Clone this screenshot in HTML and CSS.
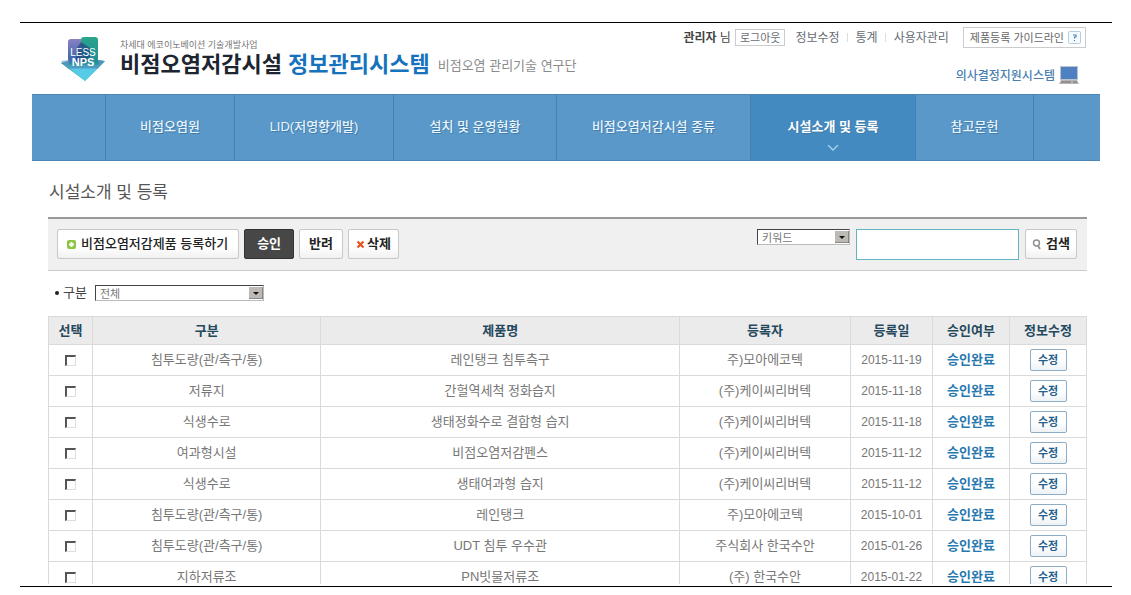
FILE: index.html
```html
<!DOCTYPE html>
<html lang="ko">
<head>
<meta charset="utf-8">
<meta name="viewport" content="width=device-width, initial-scale=1">
<title>비점오염저감시설 정보관리시스템</title>
<link rel="stylesheet" href="styles.css">
</head>
<body>
<div class="frame">
<div class="page">
  <header class="header">
    <a class="brand" href="#">
      <svg class="logo" viewBox="0 0 46 48" aria-hidden="true">
        <defs>
          <linearGradient id="lg-a" x1="0" y1="0" x2="0" y2="1"><stop offset="0" stop-color="#8a82c4"/><stop offset=".5" stop-color="#4668ac"/><stop offset="1" stop-color="#3c93c9"/></linearGradient>
          <linearGradient id="lg-b" x1="0" y1="0" x2="0" y2="1"><stop offset="0" stop-color="#2aa58c"/><stop offset=".55" stop-color="#248c98"/><stop offset="1" stop-color="#4bc6dc"/></linearGradient>
        </defs>
        <path d="M11 4h12l4 5v31L1 28l7-2V7q0-3 3-3z" fill="url(#lg-a)"/>
        <path d="M21 5q0-3 3-3h11q3 0 3 3v20l7 1-20 20L1 28h20z" fill="url(#lg-b)"/>
        <path d="M21 7l9 6v14H16V14z" fill="#203f80" opacity=".65"/>
        <path d="M9 33h29L25 46z" fill="#56cbe6"/>
        <path d="M1 26l8-1v5h30l-1-5 7 1-7 8H8z" fill="#609fcb" opacity=".6"/>
        <text x="23" y="21" class="logo-top">LESS</text>
        <text x="23" y="31" class="logo-bottom">NPS</text>
      </svg>
      <span class="brand-text">
        <span class="brand-program">차세대 에코이노베이션 기술개발사업</span>
        <span class="brand-line"><strong class="brand-name">비점오염저감시설 <em>정보관리시스템</em></strong><span class="brand-group">비점오염 관리기술 연구단</span></span>
      </span>
    </a>
    <div class="account">
      <div class="account-row">
        <span class="user"><strong>관리자</strong> 님</span>
        <button class="logout" type="button">로그아웃</button>
        <ul class="account-links">
          <li><a href="#">정보수정</a></li>
          <li><a href="#">통계</a></li>
          <li><a href="#">사용자관리</a></li>
        </ul>
        <a class="guide" href="#">제품등록 가이드라인
          <svg class="guide-icon" viewBox="0 0 13 13" aria-hidden="true"><rect x=".5" y=".5" width="12" height="12" rx="1" fill="#f5fafd" stroke="#b5cddd"/><path d="M5 4h3v2H6.500v1.500M6.500 9v1" fill="none" stroke="#4c86b8" stroke-width="1.200"/></svg>
        </a>
      </div>
      <a class="decision" href="#">의사결정지원시스템
        <svg class="decision-icon" viewBox="0 0 20 19" aria-hidden="true"><rect x="1" y="0" width="18" height="14" fill="#bcc3cf"/><rect x="2" y="1" width="16" height="12" fill="#4e80c2"/><path d="M2 14h16l2 4H0z" fill="#b9b4b6"/><path d="M2 16h10M14 16h4" stroke="#6c6870"/></svg>
      </a>
    </div>
  </header>

  <nav class="nav" aria-label="주 메뉴">
    <span></span>
    <a href="#">비점오염원</a>
    <a href="#">LID(저영향개발)</a>
    <a href="#">설치 및 운영현황</a>
    <a href="#">비점오염저감시설 종류</a>
    <a class="active" href="#" aria-current="page">시설소개 및 등록
      <svg class="chevron" viewBox="0 0 12 6" aria-hidden="true"><path d="M1 0l5 5 5-5" fill="none" stroke="#a9d3ef" stroke-width="1.300"/></svg>
    </a>
    <a href="#">참고문헌</a>
    <span></span>
  </nav>

  <main class="content">
    <h1 class="title">시설소개 및 등록</h1>

    <div class="toolbar">
      <div class="actions">
        <button class="btn btn-add" type="button"><svg class="icon" viewBox="0 0 9 9" aria-hidden="true"><rect width="9" height="9" rx="2" fill="#8ac63f"/><path d="M4.500 2v5M2 4.500h5" stroke="#fff" stroke-width="2"/></svg>비점오염저감제품 등록하기</button>
        <button class="btn btn-dark" type="button">승인</button>
        <button class="btn" type="button">반려</button>
        <button class="btn btn-delete" type="button"><svg class="icon" viewBox="0 0 9 9" aria-hidden="true"><path d="M1.500 1.500l6 6M7.500 1.500l-6 6" stroke="#e8531f" stroke-width="2.200"/></svg>삭제</button>
      </div>
      <form class="search">
        <span class="picker picker-key">
          <select aria-label="검색 조건"><option>키워드</option></select>
          <svg class="arrow" viewBox="0 0 14 12" aria-hidden="true"><rect width="14" height="12" fill="#bdbab5"/><path d="M0 12h14V0" fill="none" stroke="#555"/><path d="M4 5h6L7 8z" fill="#111"/></svg>
        </span>
        <input class="search-input" type="text" aria-label="검색어">
        <button class="btn btn-search" type="button"><svg class="icon" viewBox="0 0 9 11" aria-hidden="true"><circle cx="4.500" cy="4" r="3" fill="none" stroke="#8c8c8c" stroke-width="1.400"/><path d="M6 6.500L8 10" stroke="#8c8c8c" stroke-width="1.600"/></svg>검색</button>
      </form>
    </div>

    <div class="filter">
      <label for="kind">구분</label>
      <span class="picker picker-kind">
        <select id="kind"><option>전체</option></select>
        <svg class="arrow" viewBox="0 0 14 12" aria-hidden="true"><rect width="14" height="12" fill="#bdbab5"/><path d="M0 12h14V0" fill="none" stroke="#555"/><path d="M4 5h6L7 8z" fill="#111"/></svg>
      </span>
    </div>

    <table class="list">
      <colgroup><col class="c-check"><col class="c-kind"><col><col class="c-owner"><col class="c-date"><col class="c-state"><col class="c-edit"></colgroup>
      <thead>
        <tr><th>선택</th><th>구분</th><th>제품명</th><th>등록자</th><th>등록일</th><th>승인여부</th><th>정보수정</th></tr>
      </thead>
      <tbody>
        <tr><td><input type="checkbox" aria-label="레인탱크 침투측구 선택"></td><td>침투도량(관/측구/통)</td><td>레인탱크 침투측구</td><td>주)모아에코텍</td><td class="date">2015-11-19</td><td class="state">승인완료</td><td><button class="edit" type="button">수정</button></td></tr>
        <tr><td><input type="checkbox" aria-label="간헐역세척 정화습지 선택"></td><td>저류지</td><td>간헐역세척 정화습지</td><td>(주)케이씨리버텍</td><td class="date">2015-11-18</td><td class="state">승인완료</td><td><button class="edit" type="button">수정</button></td></tr>
        <tr><td><input type="checkbox" aria-label="생태정화수로 결합형 습지 선택"></td><td>식생수로</td><td>생태정화수로 결합형 습지</td><td>(주)케이씨리버텍</td><td class="date">2015-11-18</td><td class="state">승인완료</td><td><button class="edit" type="button">수정</button></td></tr>
        <tr><td><input type="checkbox" aria-label="비점오염저감펜스 선택"></td><td>여과형시설</td><td>비점오염저감펜스</td><td>(주)케이씨리버텍</td><td class="date">2015-11-12</td><td class="state">승인완료</td><td><button class="edit" type="button">수정</button></td></tr>
        <tr><td><input type="checkbox" aria-label="생태여과형 습지 선택"></td><td>식생수로</td><td>생태여과형 습지</td><td>(주)케이씨리버텍</td><td class="date">2015-11-12</td><td class="state">승인완료</td><td><button class="edit" type="button">수정</button></td></tr>
        <tr><td><input type="checkbox" aria-label="레인탱크 선택"></td><td>침투도량(관/측구/통)</td><td>레인탱크</td><td>주)모아에코텍</td><td class="date">2015-10-01</td><td class="state">승인완료</td><td><button class="edit" type="button">수정</button></td></tr>
        <tr><td><input type="checkbox" aria-label="UDT 침투 우수관 선택"></td><td>침투도량(관/측구/통)</td><td>UDT 침투 우수관</td><td>주식회사 한국수안</td><td class="date">2015-01-26</td><td class="state">승인완료</td><td><button class="edit" type="button">수정</button></td></tr>
        <tr><td><input type="checkbox" aria-label="PN빗물저류조 선택"></td><td>지하저류조</td><td>PN빗물저류조</td><td>(주) 한국수안</td><td class="date">2015-01-22</td><td class="state">승인완료</td><td><button class="edit" type="button">수정</button></td></tr>
      </tbody>
    </table>
  </main>
</div>
</div>
</body>
</html>
```
FILE: styles.css
```css
* { box-sizing: border-box; }

body {
  display: flex;
  height: 100vh;
  margin: 0;
  padding: 22px 19px 8px 20px;
  background: #fff;
  color: #777;
  font: 13px/18px "Liberation Sans", "Noto Sans CJK KR", sans-serif;
}

a { color: inherit; text-decoration: none; }

button, input, select { margin: 0; font: inherit; color: inherit; }

button { cursor: pointer; white-space: nowrap; }

.frame {
  display: flex;
  flex: 1;
  min-width: 0;
  padding-bottom: 2px;
  border-top: 1px solid #000;
  border-bottom: 1px solid #000;
}

.page {
  flex: 1;
  min-width: 0;
  padding: 0 12px;
  overflow: hidden;
}

/* Header */
.header {
  display: flex;
  justify-content: space-between;
  height: 71px;
  padding: 4px 14px 0 28px;
  white-space: nowrap;
}

.brand { display: flex; gap: 14px; padding-top: 8px; }

.logo { width: 46px; height: 48px; }

.logo-top, .logo-bottom {
  fill: #fff;
  font-family: "Liberation Sans", sans-serif;
  text-anchor: middle;
}

.logo-top { font-size: 10px; }
.logo-bottom { font-size: 11px; font-weight: bold; }

.brand-text { display: flex; flex-direction: column; padding-top: 4px; }

.brand-program { color: #777; font-size: 9px; line-height: 12px; }

.brand-line { display: flex; align-items: center; gap: 8px; }

.brand-name { color: #1c2530; font-size: 22px; line-height: 28px; }

.brand-name em { color: #1672bd; font-style: normal; }

.brand-group { padding-top: 2px; color: #8a8a8a; font-size: 13px; }

.account {
  display: flex;
  flex-direction: column;
  align-items: flex-end;
  gap: 18px;
  font-size: 12px;
}

.account-row { display: flex; align-items: center; color: #666c75; }

.user { color: #444; }

.logout {
  height: 17px;
  margin-left: 4px;
  padding: 0 4px;
  border: 1px solid #ccc;
  background: #fff;
  font-size: 11px;
  line-height: 14px;
}

.account-links {
  display: flex;
  margin: 0 0 0 10px;
  padding: 0;
  list-style: none;
}

.account-links li { display: flex; align-items: center; }

.account-links li + li::before {
  width: 1px;
  height: 9px;
  margin: 0 8px 0 7px;
  background: #ddd;
  content: "";
}

.guide {
  display: flex;
  align-items: center;
  gap: 4px;
  height: 21px;
  margin-left: 14px;
  padding: 0 4px 0 6px;
  border: 1px solid #ccc;
  color: #666;
  font-size: 11px;
}

.guide-icon { width: 13px; height: 13px; }

.decision {
  display: flex;
  align-items: center;
  gap: 4px;
  padding-right: 7px;
  color: #4a7fb0;
  font-weight: 500;
}

.decision-icon { width: 20px; height: 19px; }

/* Main menu */
.nav {
  display: grid;
  grid-template-columns: 73fr 129fr 159fr 163fr 194fr 165fr 118fr 67fr;
  height: 67px;
  border-top: 1px solid #4d86b4;
  border-bottom: 1px solid #4d86b4;
  background: #5998c8;
  color: #e9f4fc;
  font-weight: 500;
  text-shadow: 1px 1px 0 #427cab;
  white-space: nowrap;
}

.nav > * {
  display: flex;
  flex-direction: column;
  align-items: center;
  padding-top: 23px;
}

.nav > * + * { border-left: 1px solid #4283b5; }

.nav .active { background: #428abf; color: #fff; font-weight: bold; }

.chevron { width: 12px; height: 6px; margin-top: 9px; }

/* Content */
.content { padding: 0 13px 0 16px; }

.title {
  margin: 0;
  padding: 20px 0 12px 1px;
  color: #555;
  font-size: 17px;
  font-weight: 400;
  line-height: 24px;
}

.toolbar {
  display: flex;
  justify-content: space-between;
  height: 54px;
  padding: 10px 10px 0 9px;
  border-top: 2px solid #999;
  border-bottom: 1px solid #ccc;
  background: #f0f0f0;
}

.actions, .search { display: flex; align-items: flex-start; }

.actions { gap: 5px; }

.btn {
  display: flex;
  align-items: center;
  justify-content: center;
  gap: 5px;
  height: 30px;
  padding: 0 9px;
  border: 1px solid #c8c8c8;
  border-radius: 2px;
  background: linear-gradient(#fff 60%, #f1f1f1);
  color: #222;
  font-weight: bold;
}

.btn-add { padding: 0 10px 0 9px; font-weight: 500; }

.btn-dark {
  padding: 0 12px;
  border-color: #333;
  background: #474747;
  color: #fff;
}

.btn-delete { gap: 2px; padding: 0 7px; }

.icon { width: 9px; height: 11px; }

.search { gap: 6px; }

.picker { position: relative; display: flex; height: 16px; }

.picker-key { width: 93px; }
.picker-kind { width: 169px; }

.picker select {
  width: 100%;
  padding: 0 16px 0 4px;
  border: 1px solid #444;
  border-right-color: #bbb;
  border-bottom-color: #bbb;
  border-radius: 0;
  appearance: none;
  background: #fff;
  font-family: "Noto Sans CJK KR", sans-serif;
  font-size: 11px;
  line-height: 14px;
}

.arrow {
  position: absolute;
  top: 2px;
  right: 1px;
  width: 14px;
  height: 12px;
  pointer-events: none;
}

.search-input {
  width: 163px;
  height: 31px;
  padding: 0 6px;
  border: 1px solid #62b4c4;
  background: #fff;
}

.btn-search { padding: 0 6px; }

.filter {
  display: flex;
  align-items: center;
  gap: 8px;
  padding: 13px 0 14px 7px;
  color: #444;
}

.filter label { display: flex; align-items: center; gap: 4px; }

.filter label::before {
  width: 4px;
  height: 4px;
  border-radius: 50%;
  background: #222;
  content: "";
}

.filter .picker { color: #777; }

/* List */
.list {
  width: 100%;
  border-collapse: collapse;
  table-layout: fixed;
  text-align: center;
}

.c-check { width: 44px; }
.c-kind { width: 22%; }
.c-owner { width: 171px; }
.c-date { width: 82px; }
.c-state { width: 77px; }
.c-edit { width: 77px; }

.list th, .list td {
  padding: 0;
  border: 1px solid #dadada;
  white-space: nowrap;
}

.list th { height: 28px; background: #ebebeb; color: #24485e; }

.list td { height: 31px; }

.list .date { font-size: 12px; }

.list .state { color: #2878b0; font-weight: bold; }

.list input {
  width: 11px;
  height: 11px;
  border: 1px solid #ddd;
  border-top: 2px solid #555;
  border-left: 2px solid #555;
  appearance: none;
  background: #fff;
  vertical-align: middle;
}

.edit {
  width: 37px;
  height: 22px;
  padding: 0;
  border: 1px solid #8eacc3;
  border-radius: 2px;
  background: linear-gradient(#fff 50%, #edf2f6);
  color: #265f8c;
  font-size: 11px;
  font-weight: bold;
  line-height: 18px;
  vertical-align: middle;
}
```
